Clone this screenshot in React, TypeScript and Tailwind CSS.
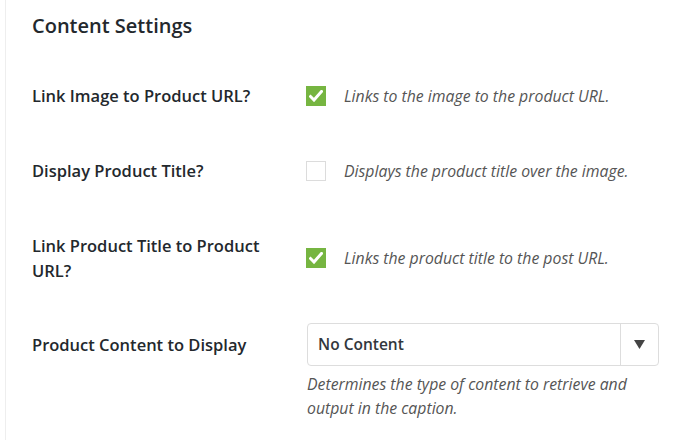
import React from "react"

function Checkbox({ checked }: { checked: boolean }) {
  if (checked) {
    return (
      <div className="w-5 h-5 bg-[#76b541] flex items-center justify-center shrink-0">
        <svg width="14" height="12" viewBox="0 0 14 12">
          <path d="M1.5 6.5 L5 10 L12.5 1.5" fill="none" stroke="#fff" strokeWidth="3" strokeLinecap="square" />
        </svg>
      </div>
    )
  }
  return <div className="w-5 h-5 bg-white border border-[#dcdcdc] shrink-0"></div>
}

function CheckRow({ label, desc, checked }: { label: React.ReactNode; desc: string; checked: boolean }) {
  return (
    <div className="flex items-center py-[25px]">
      <div className="w-[274px] shrink-0 pr-6 text-[16.5px] leading-[25px] font-semibold text-[#23282d]">{label}</div>
      <div className="flex items-center">
        <Checkbox checked={checked} />
        <span className="ml-[18px] italic text-[15.8px] leading-[24px] text-[#555]">{desc}</span>
      </div>
    </div>
  )
}

export default function App() {
  return (
    <div className="w-[700px] h-[440px] bg-white overflow-hidden" style={{ fontFamily: '"Segoe UI", "Open Sans", sans-serif' }}>
      <div className="ml-[5px] h-full border-l border-[#eeeeee] pl-[26px] pt-[13px]">
        <h2 className="text-[20px] leading-[26px] font-semibold text-[#23282d]">Content Settings</h2>
        <div className="mt-[19px]">
          <CheckRow label="Link Image to Product URL?" desc="Links to the image to the product URL." checked />
          <CheckRow label="Display Product Title?" desc="Displays the product title over the image." checked={false} />
          <CheckRow label={<>Link Product Title to Product<br />URL?</>} desc="Links the product title to the post URL." checked />
          <div className="flex items-start pt-[15px]">
            <div className="w-[275px] shrink-0 text-[16.5px] leading-[43px] font-semibold text-[#23282d]">Product Content to Display</div>
            <div className="w-[352px]">
              <div className="h-[43px] flex border border-[#dddddd] rounded-[4px] bg-white">
                <div className="flex-1 flex items-center pl-[10px] text-[15.5px] font-semibold text-[#32373c]">No Content</div>
                <div className="w-[38px] border-l border-[#dddddd] flex items-center justify-center">
                  <svg width="11" height="9" viewBox="0 0 11 9">
                    <path d="M0 0 H11 L5.5 9 Z" fill="#444" />
                  </svg>
                </div>
              </div>
              <p className="mt-[6px] pr-[20px] italic text-[15.8px] leading-[24px] text-[#555]">Determines the type of content to retrieve and output in the caption.</p>
            </div>
          </div>
        </div>
      </div>
    </div>
  )
}
